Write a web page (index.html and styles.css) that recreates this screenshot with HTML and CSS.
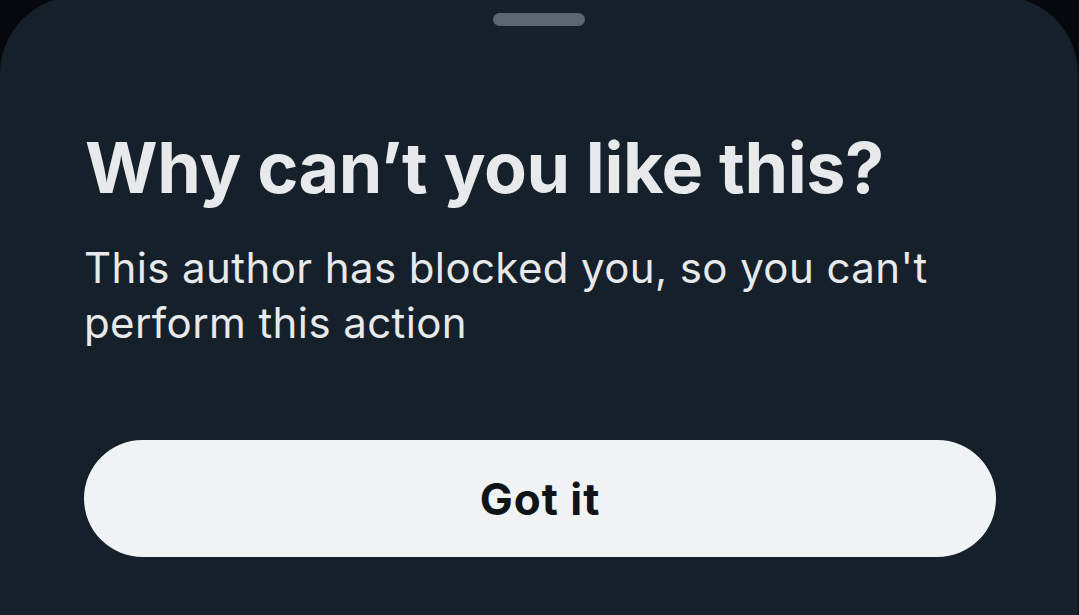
FILE: index.html
```html
<!DOCTYPE html>
<html>
<head>
<meta charset="utf-8">
<link rel="stylesheet" href="styles.css">
</head>
<body>
<div class="screen">
  <div class="sheet">
    <div class="handle"></div>
    <h1 class="title">Why can’t you like this?</h1>
    <p class="text">This author has blocked you, so you can't perform this action</p>
    <button class="btn">Got it</button>
  </div>
</div>
</body>
</html>
```
FILE: styles.css
```css
html, body {
  margin: 0;
  padding: 0;
  background: #05080c;
  width: 1079px;
  height: 615px;
  overflow: hidden;
}
.screen {
  width: 1079px;
  height: 615px;
  display: flex;
  flex-direction: column;
}
.sheet {
  flex: 1;
  margin-top: -4px;
  margin-right: 1px;
  background: #15202b;
  border-radius: 78px 78px 0 0;
  display: flex;
  flex-direction: column;
  padding: 0 84px 0 84px;
  font-family: Inter, "Noto Sans", sans-serif;
}
.handle {
  align-self: center;
  width: 92px;
  height: 13px;
  border-radius: 7px;
  background: #5b6670;
  margin-top: 17px;
}
.title {
  margin: 102px 0 0 1px;
  font-size: 70px;
  font-weight: 700;
  line-height: 80px;
  color: #e7e9ea;
  letter-spacing: -0.4px;
}
.text {
  margin: 32px 0 0 0;
  font-size: 42px;
  font-weight: 400;
  line-height: 55px;
  color: #e7e9ea;
  letter-spacing: 0.4px;
  max-width: 900px;
}
.btn {
  margin-top: 90px;
  height: 117px;
  width: 912px;
  border: none;
  border-radius: 59px;
  background: #eff3f4;
  color: #0f1419;
  font-family: Inter, "Noto Sans", sans-serif;
  font-size: 44px;
  font-weight: 700;
  letter-spacing: 1px;
}
```
